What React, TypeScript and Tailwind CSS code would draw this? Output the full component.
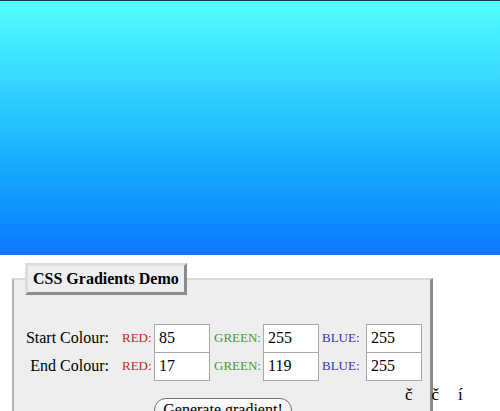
import React from "react";

const serif = { fontFamily: '"Liberation Serif", "Times New Roman", serif' };

function Row({ label, r, g, b }: { label: string; r: string; g: string; b: string }) {
  return (
    <div className="flex items-center h-[28px]">
      <div className="w-[85px] text-right text-[16px] text-black">{label}</div>
      <div className="w-[13px]" />
      <div className="w-[32px] text-[13px] text-[#c41e2c]">RED:</div>
      <input
        readOnly
        value={r}
        className="w-[56px] h-[29px] border border-[#a8a8a8] bg-white px-[4px] text-[16px] text-black outline-none"
        style={serif}
      />
      <div className="w-[53px] pl-[4px] text-[13px] text-[#3c9c3c]">GREEN:</div>
      <input
        readOnly
        value={g}
        className="w-[56px] h-[29px] border border-[#a8a8a8] bg-white px-[4px] text-[16px] text-black outline-none"
        style={serif}
      />
      <div className="w-[47px] pl-[3px] text-[13px] text-[#3434a8]">BLUE:</div>
      <input
        readOnly
        value={b}
        className="w-[56px] h-[29px] border border-[#a8a8a8] bg-white px-[4px] text-[16px] text-black outline-none"
        style={serif}
      />
    </div>
  );
}

export default function App() {
  return (
    <div className="relative w-[500px] h-[411px] overflow-hidden bg-white" style={serif}>
      <div className="h-[255px] border-t border-t-[#14424a] bg-linear-to-b from-[rgb(85,255,255)] to-[rgb(17,119,255)]" />
      <div className="flex">
        <fieldset className="ml-[12px] mt-[8px] w-[421px] h-[200px] bg-[#eeeeee] border-l-2 border-l-[#b3b3b3] border-t-2 border-t-[#d8d8d8] border-r-[3px] border-r-[#8a8a8a] border-b-0 pl-[10px] pr-[8px]">
          <legend className="ml-[1px] bg-[#eeeeee] border-[3px] border-t-[#dcdcdc] border-l-[#dcdcdc] border-r-[#8c8c8c] border-b-[#8c8c8c] px-[5px] py-[3px] text-[16px] leading-[20px] font-bold text-black">
            CSS Gradients Demo
          </legend>
          <div className="pt-[29px]">
            <Row label="Start Colour:" r="85" g="255" b="255" />
            <Row label="End Colour:" r="17" g="119" b="255" />
          </div>
          <div className="flex justify-center pt-[18px]">
            <button
              className="h-[24px] px-[8px] rounded-[12px] border border-[#707070] bg-linear-to-b from-white to-[#e4e4e4] text-[16px] leading-[22px] text-black"
              style={serif}
            >
              Generate gradient!
            </button>
          </div>
        </fieldset>
      </div>
      <div className="absolute left-[405px] top-[382px] flex gap-[19px] text-[17px] text-black">
        <span>č</span>
        <span>č</span>
        <span>í</span>
      </div>
    </div>
  );
}
